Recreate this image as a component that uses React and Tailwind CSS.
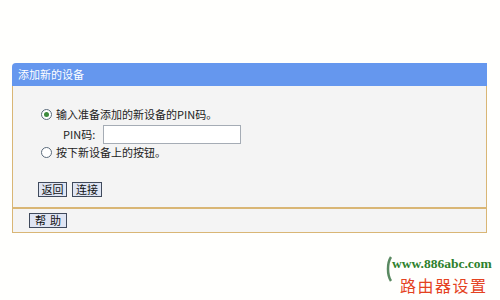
import React from 'react'

const cjk = "font-['SimSun','Noto_Sans_CJK_SC',sans-serif]"

function Radio({ checked }) {
  return (
    <span className="w-[11px] h-[11px] rounded-full border border-[#5b6b7b] bg-white flex items-center justify-center shrink-0">
      {checked && <span className="w-[5px] h-[5px] rounded-full bg-[#3d8a3d]" />}
    </span>
  )
}

function Btn({ children, className = '' }) {
  return (
    <button className={`h-[15px] flex items-center justify-center border border-[#404a5c] bg-[#dfe5f3] text-[11px] leading-none text-[#111] ${className}`}>
      {children}
    </button>
  )
}

export default function App() {
  return (
    <div className={`w-[500px] h-[300px] bg-[#fffffd] pt-[63px] px-[12px] overflow-hidden ${cjk}`}>
      {/* panel */}
      <div className="w-[475px]">
        <div className="h-[23px] bg-[#6597ee] rounded-tl-[4px] flex items-center pl-[6px] text-[11px] text-white">
          添加新的设备
        </div>
        <div className="h-[121px] bg-[#f4f4f4] border-x border-[#d9b675] pt-[20px] pl-[25px] text-[11px] text-[#222]">
          <div className="h-[16px] ml-[3px] flex items-center gap-[4px]">
            <Radio checked />
            <span>输入准备添加的新设备的PIN码。</span>
          </div>
          <div className="h-[19px] mt-[3px] ml-[25px] flex items-center">
            <span className="w-[40px] whitespace-nowrap">PIN码:</span>
            <span className="w-[138px] h-[19px] bg-white border border-[#a5acb5]" />
          </div>
          <div className="h-[16px] ml-[3px] flex items-center gap-[4px]">
            <Radio />
            <span>按下新设备上的按钮。</span>
          </div>
          <div className="mt-[22px] flex gap-[5px]">
            <Btn className="w-[29px]">返回</Btn>
            <Btn className="w-[30px]">连接</Btn>
          </div>
        </div>
        <div className="h-[26px] bg-[#f4f4f4] border-x border-t-2 border-b border-[#d9b675] flex items-center pl-[16px]">
          <Btn className="w-[38px] gap-[4px]">
            <span>帮</span>
            <span>助</span>
          </Btn>
        </div>
      </div>

      {/* watermark */}
      <div className="mt-[23px] ml-[374px] flex">
        <svg width="6" height="26" viewBox="0 0 6 26" className="shrink-0">
          <path d="M5 1 C1 7 1 19 5 25" stroke="#2f6b3a" strokeWidth="2.5" fill="none" opacity="0.8" />
        </svg>
        <div className="flex flex-col">
          <span className="font-['Liberation_Serif',serif] font-bold text-[13.5px] leading-[16px] whitespace-nowrap text-[#2d7f2d]">
            www.886abc.com
          </span>
          <span className="pl-[8px] mt-[4px] text-[16px] leading-[18px] tracking-[1.5px] text-[#e4421f] font-['Noto_Sans_CJK_SC',serif]">
            路由器设置
          </span>
        </div>
      </div>
    </div>
  )
}
